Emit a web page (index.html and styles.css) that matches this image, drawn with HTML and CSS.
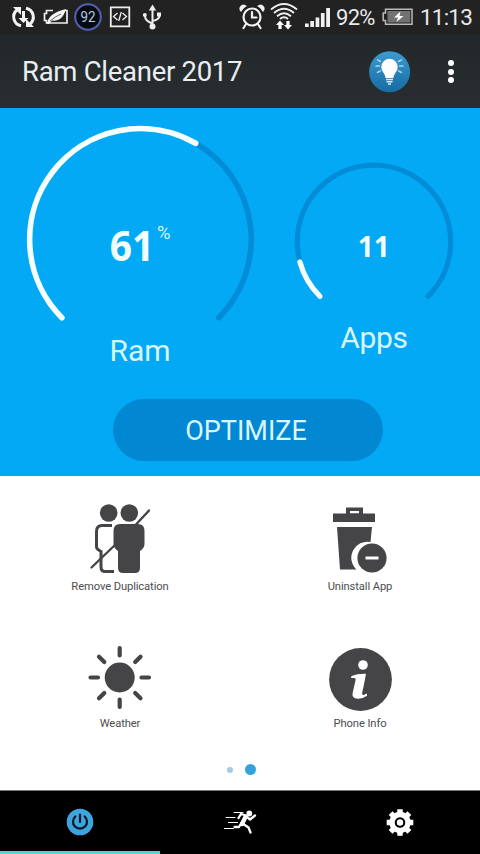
FILE: index.html
```html
<!DOCTYPE html>
<html lang="en">
<head>
<meta charset="utf-8">
<title>Ram Cleaner 2017</title>
<link rel="stylesheet" href="styles.css">
</head>
<body>
<header class="status">
  <div class="status-icons">
    <svg width="28" height="36" viewBox="10 0 28 36"><g fill="none" stroke="#f4f4f4" stroke-width="3"><path d="M21 25.800A9 9 0 0 1 17 10"/><path d="M26 8.200A9 9 0 0 1 30 24"/></g><path fill="#f4f4f4" d="M13 7h8v8zM34 27h-8v-8zM22 11h3v7h3.500L23.500 23l-5-5H22z"/></svg>
    <svg width="30" height="36" viewBox="42 0 30 36"><path d="M54 10.500h-6.500v3h-2v7h2v2.500h20.500V10.500h-2" fill="none" stroke="#eee" stroke-width="1.700"/><path d="M48 24q1-6 5-9 5-4 14-6-2 7-6 10-4 2.500-8 1.500l-3 3.500z" fill="#f4f4f4"/><path d="M51 21q6-5 11-7" fill="none" stroke="#222" stroke-width=".7"/></svg>
    <svg width="30" height="36" viewBox="73 0 30 36"><circle cx="88" cy="17" r="12.800" fill="#060a12" stroke="#5262b0" stroke-width="2"/><text x="80.500" y="22.300" textLength="15" lengthAdjust="spacingAndGlyphs" class="badge-text">92</text></svg>
    <svg width="30" height="36" viewBox="104 0 30 36"><path d="M110.800 7.300h18.500v19h-18.500z" fill="none" stroke="#eee" stroke-width="1.800"/><path d="M117.500 13l-4 3.500 4 3.500M122.500 13l4 3.500-4 3.500M121.300 12l-2.600 9" fill="none" stroke="#eee" stroke-width="1.300"/></svg>
    <svg width="24" height="36" viewBox="140 0 24 36"><g fill="none" stroke="#eee" stroke-width="2"><path d="M152.500 9v17M145 16q0 5 7.500 7.500M159.500 15.500q0 4-7 5.500"/></g><path fill="#eee" d="M152.500 4.500l3.700 6h-7.400z"/><circle cx="144.800" cy="15" r="2" fill="#eee"/><circle cx="152.500" cy="26.500" r="3" fill="#eee"/><rect x="157" y="12.500" width="4" height="4" fill="#eee"/></svg>
  </div>
  <div class="status-right">
    <svg width="28" height="36" viewBox="237 0 28 36"><g fill="none" stroke="#f2f2f2" stroke-width="2.200"><circle cx="252" cy="17" r="8.500"/><path d="M252 12v5.500h4.500M246 24l-2.500 4M258 24l2.500 4" stroke-linecap="round"/></g><path d="M241 12a12 12 0 0 1 6-6q-4-3-6.500 0t.5 6zM263 12a12 12 0 0 0-6-6q4-3 6.500 0t-.5 6z" fill="#f2f2f2"/></svg>
    <svg width="32" height="36" viewBox="268 0 32 36"><g fill="none" stroke="#eee" stroke-width="1.900"><path d="M271 9.500q13-11 26 0M274 13q10-8.500 20 0M277 16.200q7-6 14 0M280 19q4-3.500 8 0"/></g><path fill="#fff" d="M280 20.500l4 4.500h-2.400v4h-3.200v-4H276zM288 29.500l-4-4.500h2.400v-4h3.200v4h2.400z"/></svg>
    <svg width="30" height="36" viewBox="303 0 30 36"><path fill="#f2f2f2" d="M305 23.500h3.700V27H305zM310.300 21h3.700v6h-3.700zM315.600 17.500h3.700V27h-3.700zM320.900 13h3.700v14h-3.700zM326.200 8h3.800v19h-3.800z"/></svg>
    <span class="status-text percent">92%</span>
    <svg width="33" height="36" viewBox="381 0 33 36"><path d="M384.500 9.200h26.500v15h-26.500v-3.700h-2.300v-7.500h2.300z" fill="#222" stroke="#bbb" stroke-width="1.500"/><path d="M386.500 11h22.700v11.500h-22.700z" fill="#727272"/><path d="M399.500 11.500l-6.500 6h4l-1.500 4.500 7-6h-4z" fill="#fff"/></svg>
    <span class="status-text clock">11:13</span>
  </div>
</header>
<nav class="appbar">
  <h1 class="title">Ram Cleaner 2017</h1>
  <svg class="tip" width="42" height="42" viewBox="369 50 42 42"><defs><linearGradient id="bulb" x1="0" y1="0" x2="0" y2="1"><stop offset="0" stop-color="#3b9bd0"/><stop offset="1" stop-color="#176ba3"/></linearGradient></defs><circle cx="389.600" cy="70.800" r="20.500" fill="url(#bulb)"/><path d="M389.500 57.800a8.200 8.200 0 0 1 8.200 8.200c0 4.500-4 6.500-4.200 11h-8c-.2-4.500-4.200-6.500-4.200-11a8.200 8.200 0 0 1 8.200-8.200z" fill="#fff"/><path d="M386 78.500h7M386.500 80.700h6M388 82.900h3" stroke="#dcecf5" stroke-width="1.500"/><path d="M377.500 58.800l3 1.700M376 65h3.500M377.500 71.500l3-1.700M401.500 58.800l-3 1.700M403 65h-3.500M401.500 71.500l-3-1.700" stroke="#a8d6ef" stroke-width="1.500" stroke-linecap="round"/></svg>
  <div class="more"><i></i><i></i><i></i></div>
</nav>
<main>
  <section class="hero">
    <div class="gauges">
      <div class="gauge ram">
        <svg width="236" height="204" viewBox="22 122 236 204" fill="none" stroke-width="5.600" stroke-linecap="round"><path d="M195.700 143.300A110.900 110.900 0 0 1 218.900 317.700" stroke="#028cd8"/><path d="M61.900 317.700A110.900 110.900 0 0 1 195.700 143.300" stroke="#f5ffff"/><text x="109.800" y="261.300" textLength="44.500" lengthAdjust="spacingAndGlyphs" class="value big">61</text><text x="157" y="238.500" textLength="13.500" lengthAdjust="spacingAndGlyphs" class="value unit">%</text></svg>
        <span class="label">Ram</span>
      </div>
      <div class="gauge apps">
        <svg width="164" height="144" viewBox="292 158 164 144" fill="none" stroke-width="5.200" stroke-linecap="round"><path d="M320 296.300A76.700 76.700 0 1 1 428 296.300" stroke="#028cd8"/><path d="M320 296.300A76.700 76.700 0 0 1 299.900 262" stroke="#f5ffff"/><text x="357.800" y="256.900" textLength="32" lengthAdjust="spacingAndGlyphs" class="value small">11</text></svg>
        <span class="label">Apps</span>
      </div>
    </div>
    <button class="optimize">OPTIMIZE</button>
  </section>
  <section class="tools">
    <a class="tool">
      <svg width="66" height="74" viewBox="87 501 66 74"><g fill="#454547"><circle cx="108.700" cy="513" r="8.800"/><circle cx="129.300" cy="513" r="8.800"/><path d="M120 524h18q6.500 0 6.500 7v13q0 4-4.500 7v17q0 5-5 5h-12q-5 0-5-5v-17q-4.500-3-4.500-7v-13q0-7 6.500-7z"/></g><g fill="none" stroke="#454547"><path d="M112 525.500h-10q-5.500 0-5.500 6V547q0 2 4.500 4.500V567q0 4.500 4 4.500h9" stroke-width="3"/><path d="M91.500 567.500L116 544M136 524.500l13-14" stroke-width="2.400" stroke-linecap="round"/></g></svg>
      <span>Remove Duplication</span>
    </a>
    <a class="tool">
      <svg width="66" height="74" viewBox="327 501 66 74"><path fill="#454547" d="M333 513.500h13V507.500h17v6h12v8.500h-42zM350 511v2.200h9V511zM337 527h35l-1.500 15a16 16 0 0 0-14 27.500H340z" fill-rule="evenodd"/><circle cx="372" cy="558" r="14.600" fill="#454547"/><path d="M365.500 556.500h13v3h-13z" fill="#fff"/></svg>
      <span>Uninstall App</span>
    </a>
    <a class="tool">
      <svg width="66" height="74" viewBox="87 640 66 74"><circle cx="119.700" cy="677.500" r="15" fill="#454547"/><path d="M119.700 648v7.500M119.700 699.500v7.500M90.500 677.500h7.500M141.500 677.500h7.500M99 656.800l5.300 5.300M135.200 693l5.300 5.300M99 698.300l5.300-5.300M135.200 662l5.300-5.300" stroke="#454547" stroke-width="4.200" stroke-linecap="round"/></svg>
      <span>Weather</span>
    </a>
    <a class="tool">
      <svg width="66" height="74" viewBox="327 640 66 74"><circle cx="360.500" cy="679.500" r="31.400" fill="#454547"/><circle cx="363" cy="665" r="4.800" fill="#fff"/><path d="M351.500 676q6-2.600 14.500-2.300-1.500 9-3.700 18.500-.6 3.300 1.500 2.700 1.500-.5 3.200-1.300v2.200q-4.500 3.200-9 3-7-.3-5.200-6.800l2.700-11.500q.7-2.500-1.500-2.500h-3z" fill="#fff"/></svg>
      <span>Phone Info</span>
    </a>
  </section>
  <div class="pager"><i class="dot"></i><i class="dot current"></i></div>
</main>
<footer class="tabs">
  <a class="tab active"><svg width="40" height="30" viewBox="60 807 40 30"><circle cx="80" cy="822" r="13.300" fill="#3da5de"/><path d="M75.300 816.500a7 7 0 1 0 9.400 0M80 814.500v7.500" fill="none" stroke="#071722" stroke-width="2.200" stroke-linecap="round"/></svg></a>
  <a class="tab"><svg width="40" height="30" viewBox="220 807 40 30"><circle cx="249.300" cy="813.500" r="2.900" fill="#fff"/><path d="M245.500 817l-3.500 7" stroke="#fff" stroke-width="4.400" stroke-linecap="round"/><g fill="none" stroke="#fff" stroke-linecap="round" stroke-linejoin="round"><path d="M246 815.500l-5-1.500-2.500 4M247 817l3 2.500 5-4M241 823.500l-2 3.500h-4.500M242.500 823.500l6 4 2 5" stroke-width="2.300"/><path d="M234 812.500h9M226 817.500h9M228.500 822.500h9M224.500 828.500h9" stroke-width="1.100"/></g></svg></a>
  <a class="tab"><svg width="40" height="30" viewBox="380 807 40 30"><g fill="none" stroke="#fff"><circle cx="400" cy="822.500" r="8" stroke-width="5.400"/><path d="M400 809.200v3.500M400 832.300v3.500M386.700 822.500h3.500M409.800 822.500h3.500M390.600 813.100l2.500 2.500M406.900 829.400l2.500 2.500M390.600 831.900l2.500-2.500M406.900 815.600l2.500-2.500" stroke-width="5.500"/></g><circle cx="400" cy="822.500" r="3.200" fill="#fff"/></svg></a>
</footer>
</body>
</html>
```
FILE: styles.css
```css
* { box-sizing: border-box; }
body {
  margin: 0;
  width: 480px;
  height: 854px;
  display: flex;
  flex-direction: column;
  overflow: hidden;
  font-family: Roboto, "Liberation Sans", sans-serif;
  background: #fff;
}
svg { display: block; flex: none; }

.status {
  height: 35px;
  padding: 0 8px 0 10px;
  display: flex;
  justify-content: space-between;
  background: #222223;
  color: #e9e9e9;
}
.status-icons { display: flex; gap: 3px; }
.status-icons svg:nth-child(3) { margin-left: -1px; }
.status-icons svg:nth-child(4) { margin-left: -2px; }
.status-icons svg:nth-child(5) { margin-left: 3px; }
.status-right { display: flex; gap: 3px; }
.badge-text { font-size: 14.8px; fill: #b9cbe0; }
.status-text { line-height: 35px; white-space: nowrap; }
.percent { width: 43px; font-size: 22px; letter-spacing: -0.7px; }
.clock { width: 54px; padding-left: 2px; font-size: 22.5px; letter-spacing: -0.8px; }

.appbar {
  height: 73px;
  padding: 0 26px 0 22px;
  display: flex;
  align-items: center;
  background: linear-gradient(#22282a, #292d31);
}
.title {
  margin: 0;
  flex: 1;
  font-size: 27.5px;
  font-weight: 400;
  letter-spacing: -0.28px;
  color: #e8eef2;
  white-space: nowrap;
}
.tip { margin-right: 37px; }
.more { display: flex; flex-direction: column; gap: 2.500px; width: 6px; }
.more i { width: 6px; height: 6px; border-radius: 50%; background: #fff; }

.hero {
  height: 367.500px;
  background: #03a9f5;
  display: flex;
  flex-direction: column;
  align-items: center;
}
.gauges { height: 291px; display: flex; width: 100%; }
.gauge { display: flex; flex-direction: column; align-items: center; }
.ram { width: 280px; padding-top: 14px; }
.apps { width: 188px; padding-top: 50px; }
.label { color: #d9f5ff; font-size: 30px; line-height: 36px; }
.ram .label { margin-top: 7px; }
.apps .label { margin-top: 18px; letter-spacing: -0.3px; }
.value { fill: #f2ffff; stroke: none; font-family: "Open Sans", "Noto Sans", sans-serif; font-weight: 700; }
.big { font-size: 41px; }
.unit { font-family: Roboto, sans-serif; font-size: 19px; font-weight: 400; fill: #d9f7ff; }
.small { font-size: 29px; }
.optimize {
  width: 270px;
  height: 62px;
  margin-left: 16px;
  border: 0;
  border-radius: 31px;
  background: #0288d2;
  color: #dcf6ff;
  font: 400 27px/62px Roboto, "Liberation Sans", sans-serif;
  padding: 1px 4px 0 0;
}

.tools {
  height: 278.500px;
  padding-top: 25.500px;
  display: grid;
  grid-template-columns: 240px 240px;
  grid-template-rows: 139px 114px;
}
.tool {
  display: flex;
  flex-direction: column;
  align-items: center;
  color: #4d4d4f;
  font-size: 11.2px;
  letter-spacing: -0.1px;
  line-height: 14px;
}
.tool span { margin-top: 5px; }
.tool:nth-child(n + 3) span { margin-top: 3px; }

.pager {
  height: 36px;
  padding-left: 227px;
  padding-top: 10px;
  display: flex;
  align-items: flex-start;
  gap: 12px;
}
.dot { width: 6px; height: 6px; margin-top: 3px; border-radius: 50%; background: #a5cbe0; }
.dot.current { width: 11px; height: 11px; margin-top: 0; background: #36a2dc; }

.tabs {
  height: 64px;
  display: grid;
  grid-template-columns: repeat(3, 1fr);
  background: #000;
  border-top: 1px solid #777;
}
.tab { display: flex; justify-content: center; padding-top: 16px; border-bottom: 3px solid transparent; }
.tab.active { border-bottom-color: #55d3d0; }
```
